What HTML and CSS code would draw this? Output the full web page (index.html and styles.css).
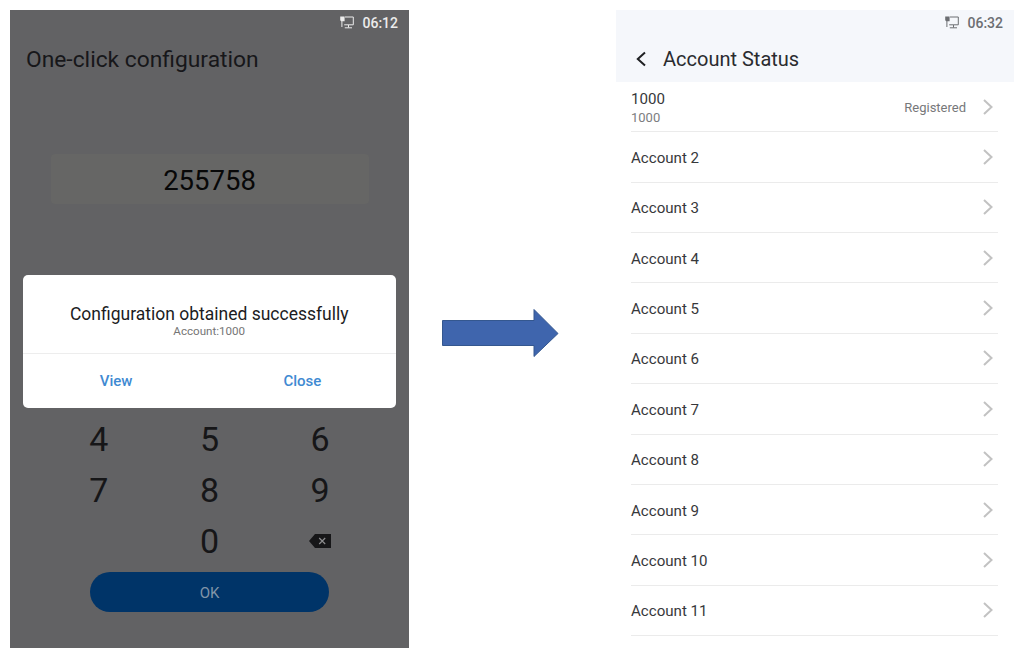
FILE: index.html
```html
<!DOCTYPE html>
<html lang="en">
<head>
  <meta charset="UTF-8">
  <title>Account Status</title>
  <link rel="stylesheet" href="styles.css">
</head>
<body>

  <!-- Shared icons -->
  <svg class="icon-defs">
    <symbol id="icon-network" viewBox="0 0 14 13">
      <path d="M5 1h8.3v7.8H4.2M8.5 9v2.5M4.8 11.8h7.2M1.9 5v6" fill="none" stroke="currentColor" stroke-width="1"/>
      <path d="M.2.5h4.4v4.7H1.2L.2 4.2z" fill="currentColor"/>
    </symbol>
    <symbol id="icon-chevron" viewBox="0 0 10 16">
      <path d="M1 1l7.5 7L1 15" fill="none" stroke="currentColor" stroke-width="2"/>
    </symbol>
  </svg>

  <div class="phone phone-config">
    <div class="status-bar">
      <svg class="icon-network"><use href="#icon-network"/></svg>
      <span>06:12</span>
    </div>
    <h1 class="config-title">One-click configuration</h1>
    <div class="code-input">255758</div>

    <div class="keypad">
      <span>4</span><span>5</span><span>6</span>
      <span>7</span><span>8</span><span>9</span>
      <span></span><span>0</span>
      <span>
        <svg class="icon-delete" viewBox="0 0 22 14">
          <path d="M6 0h16v14H6L0 7z" fill="#161618"/>
          <path d="M10.2 4l6 6M16.2 4l-6 6" stroke="#8c8c8e" stroke-width="1.2"/>
        </svg>
      </span>
    </div>
    <button class="btn-ok">OK</button>

    <div class="dialog">
      <div class="dialog-body">
        <div class="dialog-title">Configuration obtained successfully</div>
        <div class="dialog-text">Account:1000</div>
      </div>
      <div class="dialog-actions">
        <button>View</button>
        <button>Close</button>
      </div>
    </div>
  </div>

  <svg class="arrow" viewBox="0 0 117 50">
    <path d="M.5 12.5h91.5V1.5L116 25.5 92 48.5V37.5H.5z" fill="#3f65ad" stroke="#34578f" stroke-width="1"/>
  </svg>

  <div class="phone phone-accounts">
    <div class="header">
      <div class="status-bar">
        <svg class="icon-network"><use href="#icon-network"/></svg>
        <span>06:32</span>
      </div>
      <div class="header-title">
        <svg class="icon-back" viewBox="0 0 10 15"><path d="M9 1L1.8 7.5 9 14" fill="none" stroke="#1f2023" stroke-width="2"/></svg>
        <h1>Account Status</h1>
      </div>
    </div>
    <ul class="account-list">
      <li>
        <div class="account-name">1000<small>1000</small></div>
        <span class="account-state">Registered</span>
        <svg class="icon-chevron"><use href="#icon-chevron"/></svg>
      </li>
      <li><div class="account-name">Account 2</div><svg class="icon-chevron"><use href="#icon-chevron"/></svg></li>
      <li><div class="account-name">Account 3</div><svg class="icon-chevron"><use href="#icon-chevron"/></svg></li>
      <li><div class="account-name">Account 4</div><svg class="icon-chevron"><use href="#icon-chevron"/></svg></li>
      <li><div class="account-name">Account 5</div><svg class="icon-chevron"><use href="#icon-chevron"/></svg></li>
      <li><div class="account-name">Account 6</div><svg class="icon-chevron"><use href="#icon-chevron"/></svg></li>
      <li><div class="account-name">Account 7</div><svg class="icon-chevron"><use href="#icon-chevron"/></svg></li>
      <li><div class="account-name">Account 8</div><svg class="icon-chevron"><use href="#icon-chevron"/></svg></li>
      <li><div class="account-name">Account 9</div><svg class="icon-chevron"><use href="#icon-chevron"/></svg></li>
      <li><div class="account-name">Account 10</div><svg class="icon-chevron"><use href="#icon-chevron"/></svg></li>
      <li><div class="account-name">Account 11</div><svg class="icon-chevron"><use href="#icon-chevron"/></svg></li>
    </ul>
  </div>

</body>
</html>
```
FILE: styles.css
```css
* {
  box-sizing: border-box;
}

body {
  margin: 0;
  padding: 10px;
  height: 658px;
  display: flex;
  overflow: hidden;
  background: #fff;
  font-family: Roboto, sans-serif;
}

h1 {
  margin: 0;
  font-weight: 400;
}

button {
  padding: 0;
  border: none;
  background: none;
  font-family: inherit;
  cursor: pointer;
}

.icon-defs {
  display: none;
}

.phone {
  height: 638px;
}

.status-bar {
  height: 26px;
  display: flex;
  justify-content: flex-end;
  align-items: center;
  gap: 8px;
  padding-right: 11px;
  font-size: 14px;
  font-weight: 500;
}

.icon-network {
  width: 14px;
  height: 13px;
  margin-bottom: 1px;
}

/* Configuration screen */
.phone-config {
  position: relative;
  width: 399px;
  display: flex;
  flex-direction: column;
  align-items: center;
  background: #626264;
}

.phone-config .status-bar {
  align-self: stretch;
  color: #ececec;
}

.config-title {
  align-self: stretch;
  padding: 1px 0 0 16px;
  font-size: 22.8px;
  line-height: 46px;
  color: #17171a;
}

.code-input {
  width: 318px;
  height: 50px;
  margin-top: 71px;
  border-radius: 4px;
  background: #666665;
  color: #080808;
  font-size: 27.5px;
  line-height: 53px;
  text-align: center;
}

.keypad {
  width: 332px;
  margin-top: 210px;
  display: grid;
  grid-template-columns: repeat(3, 1fr);
  grid-auto-rows: 51px;
  color: #161618;
  font-size: 34px;
  line-height: 51px;
  text-align: center;
}

.keypad span {
  display: flex;
  justify-content: center;
}

.icon-delete {
  width: 22px;
  height: 14px;
  margin-top: 18px;
}

.btn-ok {
  width: 239px;
  height: 40px;
  margin-top: 5px;
  padding-top: 1px;
  border-radius: 20px;
  background: #003468;
  color: #8295a8;
  font-size: 15px;
}

.dialog {
  position: absolute;
  top: 265px;
  left: 13px;
  width: 372.5px;
  height: 132.5px;
  border-radius: 5px;
  background: #fff;
  text-align: center;
}

.dialog-body {
  height: 79px;
  padding-top: 29px;
  border-bottom: 1px solid #ededed;
}

.dialog-title {
  color: #1c1c1e;
  font-size: 17.5px;
  line-height: 21px;
}

.dialog-text {
  color: #757575;
  font-size: 11.6px;
  line-height: 12px;
}

.dialog-actions {
  height: 53px;
  display: grid;
  grid-template-columns: 1fr 1fr;
}

.dialog-actions button {
  padding-top: 1px;
  color: #3f8ad2;
  font-size: 15px;
  font-weight: 500;
}

.arrow {
  width: 117px;
  height: 50px;
  margin: 298px 57px 0 33px;
}

/* Account list */
.phone-accounts {
  width: 398px;
}

.header {
  height: 72px;
  background: #f5f7fb;
}

.header .status-bar {
  color: #6c6e72;
}

.header-title {
  height: 46px;
  display: flex;
  align-items: center;
  gap: 17px;
  padding-left: 20px;
}

.header-title h1 {
  color: #2a2b2f;
  font-size: 20px;
}

.icon-back {
  width: 10px;
  height: 16px;
}

.account-list {
  margin: 0;
  padding: 0 16px 0 15px;
  list-style: none;
}

.account-list li {
  height: 50.36px;
  display: flex;
  align-items: center;
  padding-right: 5px;
  border-bottom: 1px solid #ebebeb;
}

.account-name {
  flex: 1;
  padding-top: 2px;
  color: #37383b;
  font-size: 15.1px;
  line-height: 20px;
}

.account-name small {
  display: block;
  color: #7c7d80;
  font-size: 13px;
  line-height: 18px;
}

.account-state {
  margin-right: 17px;
  padding-top: 1px;
  color: #77787a;
  font-size: 13px;
}

.icon-chevron {
  width: 10px;
  height: 16px;
  color: #c2c2c2;
}
```
